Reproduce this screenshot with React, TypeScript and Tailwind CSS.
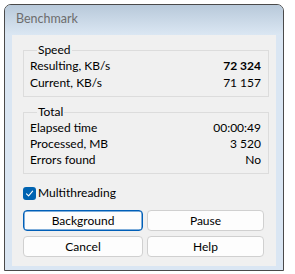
import React from "react";

const font = { fontFamily: 'Lato, "Noto Sans", sans-serif' };

function Row({ label, value, bold }: { label: string; value: string; bold?: boolean }) {
  return (
    <div className="flex h-[16px] items-center justify-between leading-[16px]">
      <span>{label}</span>
      <span className={bold ? "font-bold" : ""}>{value}</span>
    </div>
  );
}

function Group({ title, children }: { title: string; children: React.ReactNode }) {
  return (
    <fieldset className="border border-[#dcdcdc] pl-[6px] pr-[7px] pb-[5px]">
      <legend className="ml-[7px] px-[1px] h-[16px] leading-[16px]">{title}</legend>
      {children}
    </fieldset>
  );
}

function Btn({ children, primary }: { children: React.ReactNode; primary?: boolean }) {
  return (
    <button
      className={
        "h-[21px] rounded-[4px] bg-[#fdfdfd] text-[12px] leading-[19px] text-black " +
        (primary ? "border border-[#005fb8] shadow-[inset_0_0_0_0.5px_#005fb8]" : "border border-[#d0d0d0]")
      }
    >
      {children}
    </button>
  );
}

export default function App() {
  return (
    <div className="w-[295px] h-[274px] bg-white pl-[4px] pt-[4px] text-[12px] text-black" style={font}>
      <div className="w-[280px] h-[267px] border border-[#4a4a4a] rounded-t-[7px] bg-[#dae6f3] flex flex-col overflow-hidden">
        <div className="h-[30px] shrink-0 bg-gradient-to-b from-[#b8c9da] to-[#dbe7f3] pl-[11px] flex items-center text-[12.5px] text-[#6d6d6d] pb-[2px]">
          Benchmark
        </div>
        <div className="mx-[7px] mb-[4px] flex-1 bg-[#f0f0f0] pl-[11px] pr-[7px] pt-[7px] flex flex-col">
          <Group title="Speed">
            <Row label="Resulting, KB/s" value="72 324" bold />
            <div className="h-[1px]" />
            <Row label="Current, KB/s" value="71 157" />
          </Group>
          <div className="h-[7px]" />
          <Group title="Total">
            <Row label="Elapsed time" value="00:00:49" />
            <Row label="Processed, MB" value="3 520" />
            <Row label="Errors found" value="No" />
          </Group>
          <label className="mt-[12px] flex items-center h-[14px]">
            <span className="w-[13px] h-[13px] rounded-[3px] bg-[#0063b1] flex items-center justify-center">
              <svg width="9" height="9" viewBox="0 0 9 9" fill="none">
                <path d="M1.5 4.8 L3.6 6.8 L7.6 2.2" stroke="white" strokeWidth="1.1" strokeLinecap="round" strokeLinejoin="round" />
              </svg>
            </span>
            <span className="ml-[2px]">Multithreading</span>
          </label>
          <div className="mt-[10px] grid grid-cols-[120px_117px] gap-x-[4px] gap-y-[5px]">
            <Btn primary>Background</Btn>
            <Btn>Pause</Btn>
            <Btn>Cancel</Btn>
            <Btn>Help</Btn>
          </div>
        </div>
      </div>
    </div>
  );
}
